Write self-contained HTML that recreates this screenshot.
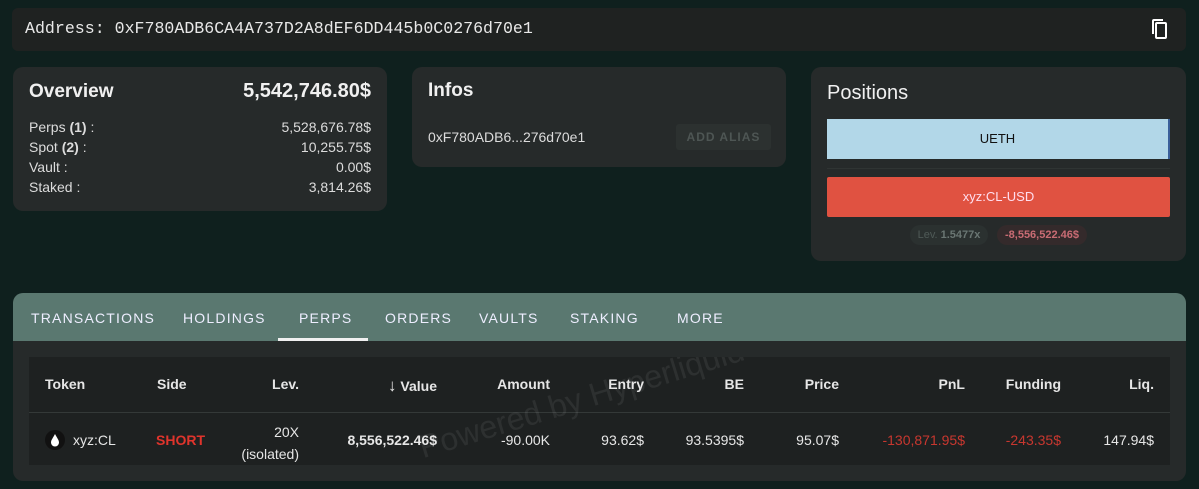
<!DOCTYPE html>
<html><head><meta charset="utf-8"><style>
*{box-sizing:border-box;margin:0;padding:0}
body{width:1199px;height:489px;background:#0f201e;font-family:"Liberation Sans",sans-serif;color:#e6e6e6;position:relative;overflow:hidden}
.abs{position:absolute}
.addr{left:12px;top:8px;width:1174px;height:43px;background:#1f2221;border-radius:6px}
.addr span{position:absolute;left:13px;top:11px;font-family:"Liberation Mono",monospace;font-size:16.6px;color:#e8e8e8}
.card{background:#262a2a;border-radius:10px}
.r{position:absolute;right:16px;text-align:right}
.t{font-size:14px;color:#dcdcdc}
</style></head><body>
<div class="abs addr"><span>Address: 0xF780ADB6CA4A737D2A8dEF6DD445b0C0276d70e1</span>
<svg class="abs" style="left:1136px;top:9px" width="24" height="24" viewBox="0 0 24 24" fill="none" stroke="#fff" stroke-width="2"><path d="M5 17V4a1 1 0 0 1 1-1h9"/><rect x="8" y="6" width="10" height="15" rx="1"/></svg></div>

<div class="abs card" style="left:13px;top:67px;width:374px;height:144px">
<div class="abs" style="left:16px;top:14px;font-size:19px;font-weight:bold;color:#f0f0f0">Overview</div>
<div class="r" style="top:13px;font-size:20px;font-weight:bold;color:#f0f0f0">5,542,746.80$</div>
<div class="abs t" style="left:16px;top:50px;line-height:20px">Perps <b>(1)</b> :<br>Spot <b>(2)</b> :<br>Vault :<br>Staked :</div>
<div class="r t" style="top:50px;line-height:20px">5,528,676.78$<br>10,255.75$<br>0.00$<br>3,814.26$</div>
</div>

<div class="abs card" style="left:412px;top:67px;width:374px;height:100px">
<div class="abs" style="left:16px;top:13px;font-size:19px;font-weight:bold;color:#f0f0f0">Infos</div>
<div class="abs t" style="left:16px;top:62px">0xF780ADB6...276d70e1</div>
<div class="abs" style="left:264px;top:57px;width:95px;height:26px;background:#2c3130;border-radius:3px;color:#4e5654;font-size:12px;letter-spacing:1px;text-align:center;line-height:26px;font-weight:bold">ADD ALIAS</div>
</div>

<div class="abs card" style="left:811px;top:67px;width:375px;height:194px">
<div class="abs" style="left:16px;top:15px;font-size:20px;color:#f0f0f0">Positions</div>
<div class="abs" style="left:16px;top:52px;width:343px;height:40px;background:#b2d7e8;border-right:2px solid #3a5f9a;color:#111;font-size:13px;text-align:center;line-height:40px">UETH</div>
<div class="abs" style="left:16px;top:101px;width:343px;height:1px;background:#2f3433"></div>
<div class="abs" style="left:16px;top:110px;width:343px;height:40px;background:#e05241;border-radius:2px;color:#fde;font-size:13px;text-align:center;line-height:40px">xyz:CL-USD</div>
<div class="abs" style="left:99px;top:158px;width:78px;height:20px;background:#2b3130;border-radius:10px;font-size:11px;color:#4f5a57;text-align:center;line-height:20px">Lev. <b style="color:#6a7673">1.5477x</b></div>
<div class="abs" style="left:186px;top:158px;width:90px;height:20px;background:#342a2b;border-radius:10px;font-size:11px;color:#c96c74;text-align:center;line-height:20px;font-weight:bold">-8,556,522.46$</div>
</div>

<div class="abs card" style="left:13px;top:293px;width:1173px;height:188px;overflow:hidden">
<div class="abs" style="left:0;top:0;width:1173px;height:48px;background:#5a7870"></div>
<div class="abs" style="top:17px;left:0;width:1173px;font-size:14px;letter-spacing:1.2px;color:#eef">
<span class="abs" style="left:18px">TRANSACTIONS</span><span class="abs" style="left:170px">HOLDINGS</span><span class="abs" style="left:286px">PERPS</span><span class="abs" style="left:372px">ORDERS</span><span class="abs" style="left:466px">VAULTS</span><span class="abs" style="left:557px">STAKING</span><span class="abs" style="left:664px">MORE</span></div>
<div class="abs" style="left:265px;top:45px;width:90px;height:3px;background:#f0f0f0"></div>
<div class="abs" style="left:16px;top:64px;width:1141px;height:108px;background:#1e2121;overflow:hidden">
<div class="abs" style="left:0;top:55px;width:1141px;height:1px;background:#343938"></div>
<div class="abs" style="top:19px;left:0;width:1141px;font-size:14px;font-weight:bold;color:#e6e6e6">
<span class="abs" style="left:16px">Token</span><span class="abs" style="left:128px">Side</span><span class="abs" style="right:871px">Lev.</span><span class="abs" style="right:733px"><span style="font-size:17px;font-weight:normal">↓</span> Value</span><span class="abs" style="right:620px">Amount</span><span class="abs" style="right:526px">Entry</span><span class="abs" style="right:426px">BE</span><span class="abs" style="right:331px">Price</span><span class="abs" style="right:205px">PnL</span><span class="abs" style="right:109px">Funding</span><span class="abs" style="right:16px">Liq.</span></div>
<div class="abs" style="left:16px;top:73px;width:20px;height:20px;border-radius:50%;background:#111"></div>
<svg class="abs" style="left:20px;top:76px" width="12" height="14" viewBox="0 0 12 14"><path d="M6 1C4 5 2 7 2 9.5a4 4 0 0 0 8 0C10 7 8 5 6 1z" fill="#fff"/></svg>
<div class="abs" style="left:396px;top:72px;font-size:32px;line-height:36px;color:rgba(255,255,255,0.07);transform:rotate(-17deg);transform-origin:left bottom;white-space:nowrap">Powered by Hyperliquid</div>
<div class="abs" style="top:75px;left:0;width:1141px;font-size:14px;color:#e6e6e6">
<span class="abs" style="left:44px">xyz:CL</span><span class="abs" style="left:127px;color:#e0342c;font-weight:bold">SHORT</span><span class="abs" style="right:871px;top:-11px;text-align:right;line-height:22px">20X<br>(isolated)</span><span class="abs" style="right:733px;font-weight:bold">8,556,522.46$</span><span class="abs" style="right:620px">-90.00K</span><span class="abs" style="right:526px">93.62$</span><span class="abs" style="right:426px">93.5395$</span><span class="abs" style="right:331px">95.07$</span><span class="abs" style="right:205px;color:#c8372f">-130,871.95$</span><span class="abs" style="right:109px;color:#c8372f">-243.35$</span><span class="abs" style="right:16px">147.94$</span></div>
</div>
</div>
</body></html>
